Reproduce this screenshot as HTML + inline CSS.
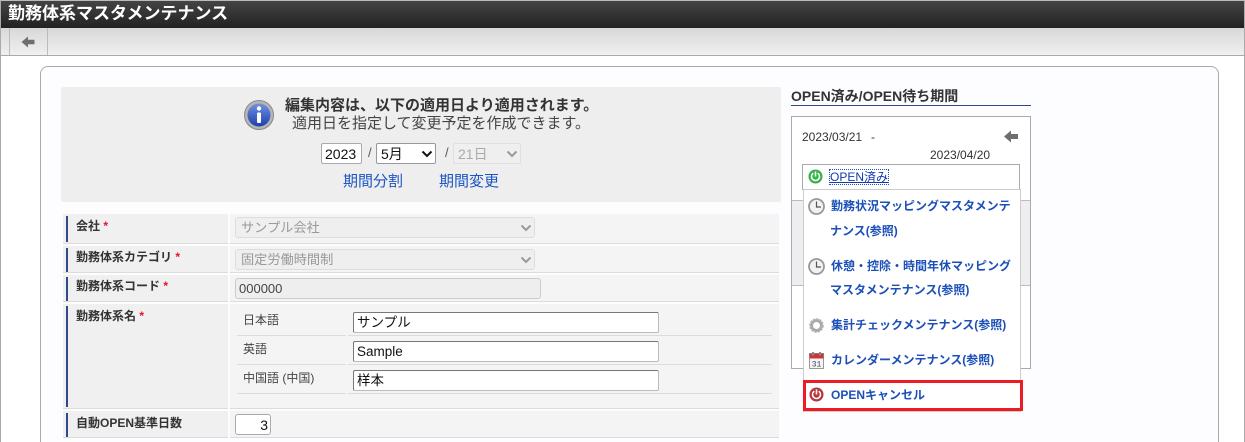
<!DOCTYPE html>
<html><head><meta charset="utf-8">
<style>
html,body{margin:0;padding:0;width:1245px;height:442px;overflow:hidden;background:#fff}
body{position:relative;font-family:"Liberation Sans","Noto Sans CJK JP",sans-serif;color:#333}
.a{position:absolute;white-space:nowrap}
.t{position:absolute;white-space:nowrap;line-height:16px}
.b{font-weight:bold}
.lab{position:absolute;left:63px;width:165px;background:#f0f0f0}
.val{position:absolute;left:230px;width:549px;background:#f4f4f4}
.bar{position:absolute;left:66px;width:2px;background:#2f4a8a}
.ln{position:absolute;height:1px;background:#dcdcdc}
.l{font-size:12px;font-weight:bold;color:#333;left:76px}
.req{color:#e8112d;font-weight:bold;font-size:12px}
.inp{position:absolute;box-sizing:border-box;height:21px;width:306px;left:353px;background:#fff;border:1px solid #bbb;border-top:1px solid #777;border-left:1px solid #777;border-radius:2px;font-size:13.5px;line-height:20px;padding-left:3px;color:#111;white-space:nowrap}
.dis{position:absolute;box-sizing:border-box;height:21px;left:235px;background:#efefef;border:1px solid #ddd;border-radius:3px;font-size:13.2px;line-height:20px;color:#999;padding-left:5px}
.m{font-size:12px;font-weight:bold;color:#1c50b8;line-height:16px;position:absolute;white-space:nowrap;left:831px}
</style></head><body>
<div class="a" style="left:0;top:0;width:1px;height:442px;background:#aaa;z-index:5"></div>
<div class="a" style="left:1243px;top:0;width:2px;height:442px;background:#fff"></div>
<div class="a" style="left:1244px;top:0;width:1px;height:442px;background:#aaa;z-index:5"></div>
<div class="a" style="left:0;top:0;width:1245px;height:1px;background:#bbb;z-index:5"></div>
<div class="a" style="left:1px;top:1px;width:1243px;height:27px;background:linear-gradient(#444,#222)"></div>
<div class="t b" style="left:8px;top:4px;font-size:17px;line-height:19px;color:#fff">勤務体系マスタメンテナンス</div>
<div class="a" style="left:1px;top:28px;width:1243px;height:27px;background:linear-gradient(#d8d8d8,#f0f0f0);border-bottom:1px solid #aaa"></div>
<div class="a" style="left:9px;top:28px;width:37px;height:27px;border-left:1px solid #bbb;border-right:1px solid #bbb"></div>
<svg class="a" style="left:21px;top:36px" width="14" height="12" viewBox="0 0 14 13"><path d="M0 6.5L7 0.5V4H14V9H7V12.5Z" fill="#6e6e6e"/></svg>

<div class="a" style="left:40px;top:66px;width:1177px;height:390px;background:#fdfdff;border:1px solid #aaa;border-radius:8px"></div>

<div class="a" style="left:61px;top:87px;width:720px;height:115px;background:#eee;border-radius:2px"></div>
<svg class="a" style="left:244px;top:100px" width="30" height="30" viewBox="0 0 30 30"><defs><linearGradient id="g" x1="0" y1="0" x2="0" y2="1"><stop offset="0" stop-color="#7290df"/><stop offset="1" stop-color="#1c3fb0"/></linearGradient></defs><circle cx="15" cy="15" r="14.5" fill="#b5b5b5" stroke="#8a8a8a"/><circle cx="15" cy="15" r="11.5" fill="url(#g)"/><circle cx="15" cy="8.5" r="2.2" fill="#fff"/><rect x="13" y="12.5" width="4" height="10.5" rx="1" fill="#fff"/></svg>
<div class="t b" style="left:285px;top:98px;font-size:15px;color:#333">編集内容は、以下の適用日より適用されます。</div>
<div class="t" style="left:292px;top:116px;font-size:15px;color:#444">適用日を指定して変更予定を作成できます。</div>
<div class="a" style="box-sizing:border-box;left:321px;top:143px;width:41px;height:21px;background:#fff;border:1px solid #aaa;border-radius:2px;font-size:14px;line-height:20px;padding-left:3px;color:#111">2023</div>
<div class="t" style="left:368px;top:145px;font-size:13px;color:#555">/</div>
<div class="a" style="box-sizing:border-box;left:376px;top:143px;width:60px;height:21px;background:#fff;border:1px solid #999;border-radius:2px;font-size:14px;line-height:20px;padding-left:4px;color:#111">5月</div>
<svg class="a" style="left:421px;top:150px" width="12" height="8" viewBox="0 0 12 8"><path d="M1.5 1.5L6 6L10.5 1.5" fill="none" stroke="#111" stroke-width="2"/></svg>
<div class="t" style="left:445px;top:145px;font-size:13px;color:#555">/</div>
<div class="a" style="box-sizing:border-box;left:453px;top:143px;width:68px;height:21px;background:#efefef;border:1px solid #e0e0e0;border-radius:2px;font-size:14px;line-height:20px;padding-left:4px;color:#aaa">21日</div>
<svg class="a" style="left:506px;top:150px" width="12" height="8" viewBox="0 0 12 8"><path d="M1.5 1.5L6 6L10.5 1.5" fill="none" stroke="#999" stroke-width="2"/></svg>
<div class="t" style="left:343px;top:174px;font-size:15px;color:#1c55c4">期間分割</div>
<div class="t" style="left:439px;top:174px;font-size:15px;color:#1c55c4">期間変更</div>

<div class="lab" style="top:214px;height:29px"></div><div class="val" style="top:214px;height:29px"></div>
<div class="ln" style="left:63px;top:243px;width:165px"></div><div class="ln" style="left:230px;top:243px;width:549px"></div>
<div class="bar" style="top:216px;height:26px"></div>
<div class="lab" style="top:246px;height:26px"></div><div class="val" style="top:246px;height:26px"></div>
<div class="ln" style="left:63px;top:272px;width:165px"></div><div class="ln" style="left:230px;top:272px;width:549px"></div>
<div class="bar" style="top:248px;height:24px"></div>
<div class="lab" style="top:275px;height:26px"></div><div class="val" style="top:275px;height:26px"></div>
<div class="ln" style="left:63px;top:301px;width:165px"></div><div class="ln" style="left:230px;top:301px;width:549px"></div>
<div class="bar" style="top:277px;height:24px"></div>
<div class="lab" style="top:304px;height:104px"></div><div class="val" style="top:304px;height:104px"></div>
<div class="ln" style="left:63px;top:408px;width:165px"></div><div class="ln" style="left:230px;top:408px;width:549px"></div>
<div class="bar" style="top:306px;height:101px"></div>
<div class="lab" style="top:411px;height:26px"></div><div class="val" style="top:411px;height:26px"></div>
<div class="ln" style="left:63px;top:437px;width:165px"></div><div class="ln" style="left:230px;top:437px;width:549px"></div>
<div class="bar" style="top:413px;height:24px"></div>

<div class="t l" style="top:218px">会社 <span class="req">*</span></div>
<div class="t l" style="top:249px">勤務体系カテゴリ <span class="req">*</span></div>
<div class="t l" style="top:278px">勤務体系コード <span class="req">*</span></div>
<div class="t l" style="top:308px">勤務体系名 <span class="req">*</span></div>
<div class="t l" style="top:415px">自動OPEN基準日数</div>

<div class="dis" style="top:217px;width:300px">サンプル会社</div>
<svg class="a" style="left:520px;top:224px" width="12" height="8" viewBox="0 0 12 8"><path d="M1.5 1.5L6 6L10.5 1.5" fill="none" stroke="#999" stroke-width="2"/></svg>
<div class="dis" style="top:249px;width:300px">固定労働時間制</div>
<svg class="a" style="left:520px;top:256px" width="12" height="8" viewBox="0 0 12 8"><path d="M1.5 1.5L6 6L10.5 1.5" fill="none" stroke="#999" stroke-width="2"/></svg>
<div class="dis" style="top:278px;width:306px;border-color:#ccc;color:#444;padding-left:3px;font-size:13px;background:#eee">000000</div>

<div class="t" style="left:243px;top:312px;font-size:12px;color:#444">日本語</div>
<div class="t" style="left:243px;top:341px;font-size:12px;color:#444">英語</div>
<div class="t" style="left:243px;top:370px;font-size:12px;color:#444">中国語 (中国)</div>
<div class="ln" style="left:237px;top:335px;width:109px"></div><div class="ln" style="left:348px;top:335px;width:424px"></div>
<div class="ln" style="left:237px;top:364px;width:109px"></div><div class="ln" style="left:348px;top:364px;width:424px"></div>
<div class="ln" style="left:237px;top:393px;width:109px"></div><div class="ln" style="left:348px;top:393px;width:424px"></div>
<div class="inp" style="top:312px">サンプル</div>
<div class="inp" style="top:341px">Sample</div>
<div class="inp" style="top:370px">样本</div>
<div class="a" style="box-sizing:border-box;left:235px;top:414px;width:36px;height:21px;background:#fff;border:1px solid #aaa;border-radius:3px;font-size:14px;line-height:20px;text-align:right;padding-right:2px;color:#111">3</div>

<!-- Right panel -->
<div class="t b" style="left:791px;top:88px;font-size:14px;color:#333">OPEN済み/OPEN待ち期間</div>
<div class="a" style="left:791px;top:105px;width:240px;height:1px;background:#2f4a8a"></div>
<div class="a" style="box-sizing:border-box;left:791px;top:116px;width:240px;height:253px;background:#fff;border:1px solid #aaa"></div>
<div class="a" style="left:792px;top:200px;width:238px;height:84px;background:#eee;border-top:1px solid #bbb;border-bottom:1px solid #bbb"></div>
<div class="t" style="left:802px;top:129px;font-size:12px;color:#333">2023/03/21</div>
<div class="t" style="left:871px;top:129px;font-size:12px;color:#333">-</div>
<svg class="a" style="left:1004px;top:130px" width="14" height="13" viewBox="0 0 14 13"><path d="M0 6.5L7 0.5V4H14V9H7V12.5Z" fill="#6e6e6e"/></svg>
<div class="t" style="left:930px;top:147px;font-size:12px;color:#333">2023/04/20</div>

<div class="a" style="box-sizing:border-box;left:802px;top:164px;width:218px;height:26px;background:#fff;border:1px solid #aaa;border-bottom:none"></div>
<svg class="a" style="left:808px;top:169px" width="15" height="15" viewBox="0 0 15 15"><circle cx="7.5" cy="7.5" r="7" fill="#35b24a"/><circle cx="7.5" cy="7.5" r="4" fill="none" stroke="#fff" stroke-width="1.6"/><rect x="5" y="1.5" width="5" height="3" fill="#35b24a"/><rect x="6.7" y="2.5" width="1.6" height="5" fill="#fff"/></svg>
<div class="a" style="left:830px;top:170px;font-size:12px;font-weight:normal;color:#1238b0;line-height:14px;text-decoration:underline;outline:1px dotted #1c50b8">OPEN済み</div>

<div class="a" style="box-sizing:border-box;left:803px;top:189px;width:218px;height:223px;background:#fff;border:1px solid #ccc"></div>
<svg class="a" style="left:808px;top:198px" width="17" height="17" viewBox="0 0 17 17"><circle cx="8.5" cy="8.5" r="7.5" fill="#f2f2f2" stroke="#999" stroke-width="1.8"/><path d="M8.5 3.5V9H13" fill="none" stroke="#555" stroke-width="1.2"/></svg>
<div class="m" style="top:198px">勤務状況マッピングマスタメンテ</div>
<div class="m" style="top:223px;left:830px">ナンス(参照)</div>
<svg class="a" style="left:808px;top:258px" width="17" height="17" viewBox="0 0 17 17"><circle cx="8.5" cy="8.5" r="7.5" fill="#f2f2f2" stroke="#999" stroke-width="1.8"/><path d="M8.5 3.5V9H13" fill="none" stroke="#555" stroke-width="1.2"/></svg>
<div class="m" style="top:258px">休憩・控除・時間年休マッピング</div>
<div class="m" style="top:282px;left:830px">マスタメンテナンス(参照)</div>
<svg class="a" style="left:809px;top:318px" width="15" height="15" viewBox="0 0 15 15"><circle cx="7.5" cy="7.5" r="5" fill="none" stroke="#aaa" stroke-width="3"/><circle cx="7.5" cy="7.5" r="6.6" fill="none" stroke="#b5b5b5" stroke-width="1.6" stroke-dasharray="2 1.4"/></svg>
<div class="m" style="top:317px">集計チェックメンテナンス(参照)</div>
<svg class="a" style="left:809px;top:352px" width="15" height="17" viewBox="0 0 15 17"><rect x="0.5" y="1.5" width="14" height="15" fill="#f4f4f4" stroke="#999"/><rect x="0.5" y="1.5" width="14" height="5" fill="#c8373a"/><rect x="3" y="0" width="2" height="3.5" fill="#888"/><rect x="10" y="0" width="2" height="3.5" fill="#888"/><text x="7.5" y="14.5" font-size="8" text-anchor="middle" font-family="Liberation Mono,monospace" fill="#445">31</text></svg>
<div class="m" style="top:352px">カレンダーメンテナンス(参照)</div>
<svg class="a" style="left:809px;top:387px" width="15" height="15" viewBox="0 0 15 15"><circle cx="7.5" cy="7.5" r="7" fill="#b8363a"/><circle cx="7.5" cy="7.5" r="4" fill="none" stroke="#fff" stroke-width="1.6"/><rect x="5" y="1.5" width="5" height="3" fill="#b8363a"/><rect x="6.7" y="2.5" width="1.6" height="5" fill="#fff"/></svg>
<div class="m" style="top:387px">OPENキャンセル</div>
<div class="a" style="box-sizing:border-box;left:803px;top:380px;width:220px;height:31px;border:3px solid #ed1c24"></div>
</body></html>
